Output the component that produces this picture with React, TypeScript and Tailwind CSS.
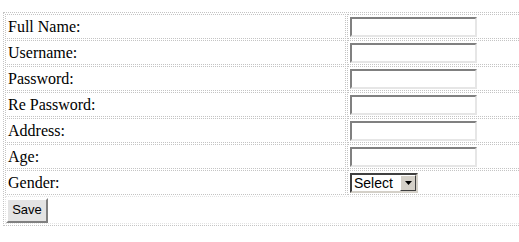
import React from "react";

const labels = ["Full Name:", "Username:", "Password:", "Re Password:", "Address:", "Age:"];

function Field() {
  return (
    <div className="w-[127px] h-[20px] border-2 border-t-[#808080] border-l-[#808080] border-r-[#e6e6e6] border-b-[#e6e6e6] bg-white" />
  );
}

export default function App() {
  return (
    <div className="w-[519px] h-[242px] overflow-hidden bg-white pt-[12px] pl-[3px]" style={{ fontFamily: '"Liberation Serif", serif' }}>
      <table className="w-[540px] border border-dotted border-[#c4c4c4] border-separate border-spacing-[1px] text-[16px] text-black">
        <tbody>
          {labels.map((l) => (
            <tr key={l}>
              <td className="w-[341px] h-[25px] border border-dotted border-[#c4c4c4] pl-[2px] p-0 align-middle leading-[18px]">{l}</td>
              <td className="h-[25px] border border-dotted border-[#c4c4c4] pl-[2px] pt-[1px] p-0 align-middle">
                <Field />
              </td>
            </tr>
          ))}
          <tr>
            <td className="w-[341px] h-[25px] border border-dotted border-[#c4c4c4] pl-[2px] p-0 align-middle leading-[18px]">Gender:</td>
            <td className="h-[25px] border border-dotted border-[#c4c4c4] pl-[2px] p-0 align-middle">
              <div className="flex items-center w-[68px] h-[20px] border-2 border-t-[#404040] border-l-[#404040] border-r-[#d4d0c8] border-b-[#d4d0c8] bg-white" style={{ fontFamily: '"Liberation Sans", Arial, sans-serif' }}>
                <span className="flex-1 pl-[2px] text-[14px] leading-[16px]">Select</span>
                <div className="w-[16px] h-[16px] bg-[#d4d0c8] border border-t-white border-l-white border-r-[#404040] border-b-[#404040] flex items-center justify-center">
                  <svg width="7" height="4" viewBox="0 0 7 4"><path d="M0 0h7L3.5 4z" fill="#000" /></svg>
                </div>
              </div>
            </td>
          </tr>
          <tr>
            <td colSpan={2} className="h-[25px] border border-dotted border-[#e4e4e4] p-0 align-middle">
              <button
                className="w-[42px] h-[25px] bg-[#e3e3e3] border-2 border-t-white border-l-white border-r-[#808080] border-b-[#808080] text-[13px] text-black leading-[16px]"
                style={{ fontFamily: '"Liberation Sans", Arial, sans-serif' }}
              >
                Save
              </button>
            </td>
          </tr>
        </tbody>
      </table>
    </div>
  );
}
